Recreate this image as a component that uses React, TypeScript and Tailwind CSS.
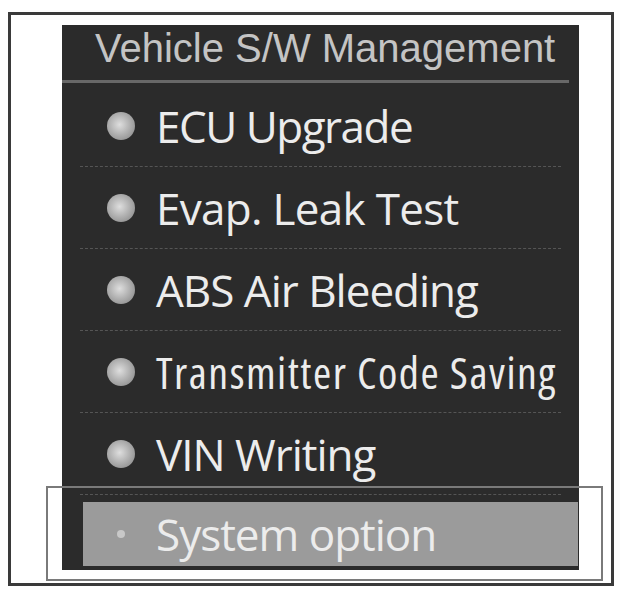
import React from "react";

const items = [
  { t: "ECU Upgrade", s: "tracking-[-1.5px]" },
  { t: "Evap. Leak Test", s: "tracking-[-0.7px]" },
  { t: "ABS Air Bleeding", s: "tracking-[-1px]" },
  { t: "Transmitter Code Saving", s: "font-stretch-condensed tracking-[1.5px]" },
  { t: "VIN Writing", s: "tracking-[-1px]" },
];

function Bullet() {
  return (
    <span className="block w-[28px] h-[28px] shrink-0 rounded-full bg-[radial-gradient(circle_at_45%_45%,#dedede_0%,#b2b2b2_45%,#7e7e7e_100%)]" />
  );
}

export default function App() {
  return (
    <div className="w-[625px] h-[601px] bg-white pt-[12px] pl-[8px]">
      <div className="relative w-[606px] h-[574px] border-[3px] border-[#3a3a3a] pt-[10px] pl-[51px]">
        <div className="w-[517px] h-[545px] bg-[#2b2b2b] flex flex-col">
          <div className="h-[55px] pt-[3px] pl-[33px] text-[40px] leading-[40px] text-[#c4c4c4] font-['Liberation_Sans',Arial,sans-serif] whitespace-nowrap">
            Vehicle S/W Management
          </div>
          <div className="h-[3px] w-[507px] bg-[#686868]" />
          <div className="mt-[2px] flex flex-col">
            {items.map(({ t, s }) => (
              <div
                key={t}
                className="h-[82px] mx-[18px] flex items-center gap-[21px] pl-[27px] border-b border-dashed border-[#555555]"
              >
                <Bullet />
                <span
                  className={
                    "text-[44px] leading-none text-[#ececec] font-['Open_Sans',sans-serif] whitespace-nowrap " +
                    s
                  }
                >
                  {t}
                </span>
              </div>
            ))}
          </div>
          <div className="mt-[7px] ml-[21px] mr-[1px] h-[64px] bg-[#9b9b9b] flex items-center pl-[34px] gap-[31px]">
            <span className="block w-[8px] h-[8px] rounded-full bg-[#c8c8c8]" />
            <span className="text-[44px] leading-none text-[#ececec] font-['Open_Sans',sans-serif] tracking-[-1px] whitespace-nowrap">
              System option
            </span>
          </div>
        </div>
        <div className="absolute left-[35px] top-[471px] w-[557px] h-[95px] border-2 border-[#7a7a7a]" />
      </div>
    </div>
  );
}
